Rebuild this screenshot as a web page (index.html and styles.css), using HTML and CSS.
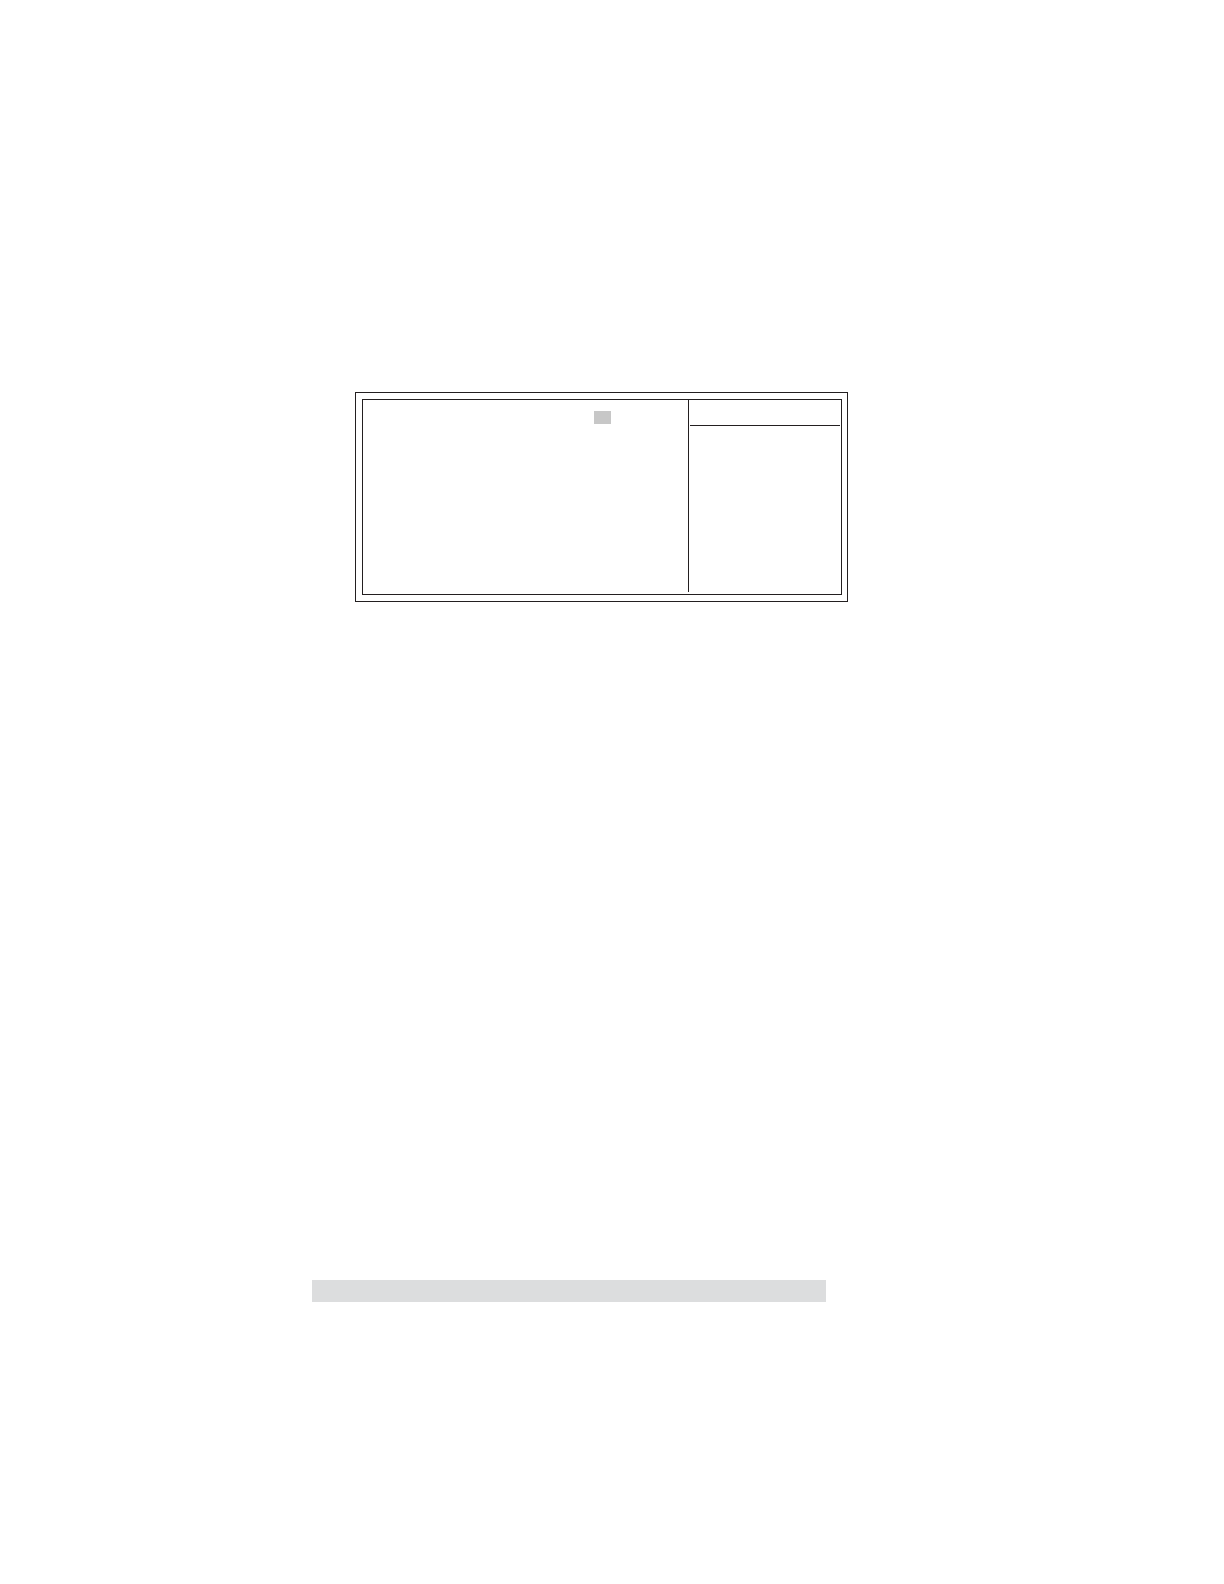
FILE: index.html
```html
<!DOCTYPE html>
<html lang="en">
<head>
    <meta charset="UTF-8">
    <meta name="viewport" content="width=device-width, initial-scale=1.0">
    <title>Setup Screen</title>
    <link rel="stylesheet" href="styles.css">
</head>
<body>

    <main class="page">
        <div class="container">
            <section class="frame">
                <div class="panel">
                    <div class="settings">
                        <div class="value"></div>
                    </div>
                    <aside class="help">
                        <div class="help-header"></div>
                    </aside>
                </div>
            </section>

            <div class="footer-bar"></div>
        </div>
    </main>

</body>
</html>
```

FILE: styles.css
```css
body {
    margin: 0;
    font-family: "Liberation Sans", Arial, sans-serif;
    background-color: #fff;
}
.page {
    display: grid;
    grid-template-columns: 312fr 536fr 376fr;
    padding: 392px 0 282px;
}
.container {
    grid-column: 2;
}
.frame {
    margin-left: 43px;
    padding: 6px 5px 6px 6px;
    border: 1px solid #231f20;
}
.panel {
    display: grid;
    grid-template-columns: 325fr 153fr;
    min-height: 194px;
    border: 1px solid #231f20;
}
.settings {
    display: grid;
    grid-template-columns: 231fr 94fr;
    align-items: start;
    padding-top: 11px;
}
/* highlighted field */
.value {
    grid-column: 2;
    width: 17px;
    height: 13px;
    background-color: #c7c7c7;
}
.help {
    margin-bottom: 2px;
    border-left: 1px solid #231f20;
}
.help-header {
    height: 25px;
    margin: 0 1px;
    border-bottom: 1px solid #231f20;
}
.footer-bar {
    height: 22px;
    margin: 678px 22px 0 0;
    background-color: #dcddde;
}
```
